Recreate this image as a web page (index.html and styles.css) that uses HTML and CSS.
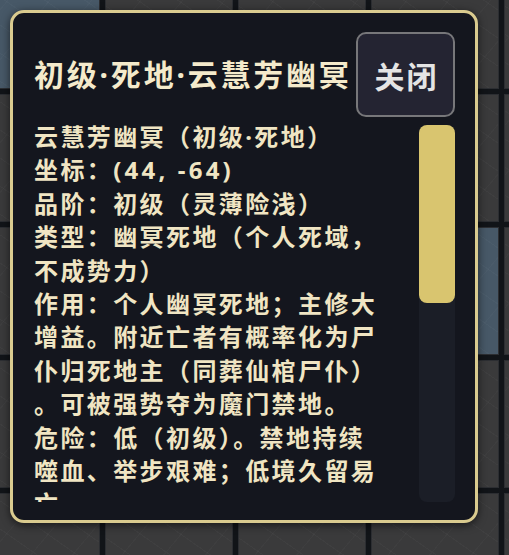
FILE: index.html
```html
<!DOCTYPE html>
<html lang="zh-CN">
<head>
<meta charset="utf-8">
<title>死地</title>
<link rel="stylesheet" href="styles.css">
</head>
<body>
<div class="map-view">
  <div class="map">
    <div class="tile tile-blue"></div><div class="tile"></div><div class="tile"></div><div class="tile"></div><div class="tile"></div>
    <div class="tile"></div><div class="tile"></div><div class="tile"></div><div class="tile"></div><div class="tile"></div>
    <div class="tile"></div><div class="tile"></div><div class="tile"></div><div class="tile tile-blue"></div><div class="tile"></div>
    <div class="tile"></div><div class="tile"></div><div class="tile"></div><div class="tile"></div><div class="tile"></div>
    <div class="tile"></div><div class="tile"></div><div class="tile"></div><div class="tile"></div><div class="tile"></div>
  </div>
</div>

<div class="modal">
  <div class="modal-header">
    <h2 class="modal-title">初级·死地·云慧芳幽冥</h2>
    <button class="close-btn">关闭</button>
  </div>
  <div class="modal-body">
    <div class="info">
      <p>云慧芳幽冥（初级·死地）</p>
      <p>坐标：<span class="num">(44, -64)</span></p>
      <p>品阶：初级（灵薄险浅）</p>
      <p>类型：幽冥死地（个人死域，不成势力）</p>
      <p>作用：个人幽冥死地；主修大增益。附近亡者有概率化为尸仆归死地主（同葬仙棺尸仆）。可被强势夺为魔门禁地。</p>
      <p>危险：低（初级）。禁地持续噬血、举步艰难；低境久留易亡。</p>
    </div>
    <div class="scroll-track"><div class="scroll-thumb"></div></div>
  </div>
</div>
</body>
</html>
```
FILE: styles.css
```css
html, body {
  margin: 0;
  padding: 0;
}
body {
  width: 509px;
  height: 555px;
  overflow: hidden;
  background: #15181c;
  font-family: "Noto Sans", "Noto Sans CJK SC", sans-serif;
  position: relative;
}

.map-view {
  width: 509px;
  height: 555px;
  overflow: hidden;
}
.map {
  display: grid;
  grid-template-columns: repeat(5, 128px);
  grid-auto-rows: 128px;
  gap: 5px;
  margin: -39px 0 0 -28px;
  width: max-content;
  background: #111418;
}
.tile {
  background-color: #3a3a3b;
  background-image:
    repeating-linear-gradient(35deg, rgba(255,255,255,0) 0 22px, rgba(255,255,255,0.025) 22px 23px),
    repeating-linear-gradient(-50deg, rgba(255,255,255,0) 0 31px, rgba(255,255,255,0.02) 31px 32px);
  box-shadow: inset 0 0 0 1px #2c2e32;
}
.tile-blue {
  background-color: #475867;
}

.modal {
  position: absolute;
  left: 10px;
  top: 10px;
  width: 468px;
  height: 513px;
  box-sizing: border-box;
  border: 3px solid #dacb8f;
  border-radius: 14px;
  background: #14161e;
  box-shadow: 0 2px 8px rgba(0, 0, 0, 0.6);
  padding: 19px 20px 18px 21px;
  display: flex;
  flex-direction: column;
}

.modal-header {
  display: flex;
  align-items: center;
  justify-content: space-between;
}
.modal-title {
  margin: 0;
  font-size: 30px;
  font-weight: 700;
  letter-spacing: 2.8px;
  line-height: 1.45;
  color: #f4eacb;
  white-space: nowrap;
}
.close-btn {
  width: 99px;
  height: 85px;
  box-sizing: border-box;
  border: 2px solid #77777a;
  border-radius: 10px;
  background: #242432;
  color: #e4e4e4;
  font-family: "Noto Sans CJK SC", "Noto Sans", sans-serif;
  font-size: 30px;
  font-weight: 700;
  letter-spacing: 2px;
  padding: 0 0 0 2px;
}

.modal-body {
  flex: 1;
  min-height: 0;
  margin-top: 3px;
  display: flex;
  justify-content: space-between;
}
.info {
  flex: 0 0 356px;
  overflow: hidden;
  font-size: 24px;
  font-weight: 700;
  line-height: 33.4px;
  letter-spacing: 2.4px;
  color: #f0e5c3;
  line-break: anywhere;
}
.info p {
  margin: 0;
}
.num {
  letter-spacing: 3.2px;
}
.scroll-track {
  width: 36px;
  margin-top: 5px;
  border-radius: 8px;
  background: #1b1e27;
}
.scroll-thumb {
  height: 178px;
  border-radius: 8px;
  background: #d9c56f;
}
```
